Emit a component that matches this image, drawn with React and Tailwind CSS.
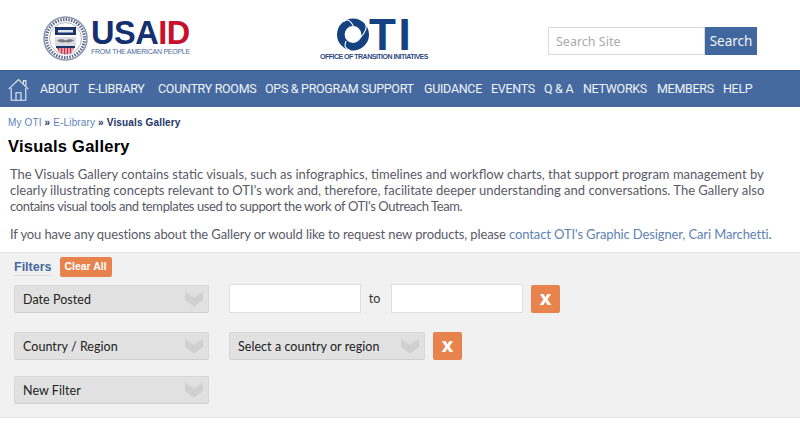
import React from "react";

const navItems = [
  ["ABOUT", "w-[39px]"],
  ["E-LIBRARY", "w-[61px]"],
  ["COUNTRY ROOMS", "w-[98px]"],
  ["OPS & PROGRAM SUPPORT", "w-[150px]"],
  ["GUIDANCE", "w-[58px]"],
  ["EVENTS", "w-[44px]"],
  ["Q & A", "w-[30px]"],
  ["NETWORKS", "w-[65px]"],
  ["MEMBERS", "w-[57px]"],
  ["HELP", "w-[29px]"],
];

function Seal() {
  return (
    <svg width="45" height="45" viewBox="0 0 45 45">
      <circle cx="22.5" cy="22.5" r="21.5" fill="#fff" stroke="#8a94ad" strokeWidth="1.5" />
      <circle cx="22.5" cy="22.5" r="19" fill="none" stroke="#5c6a90" strokeWidth="3" strokeDasharray="1.5 1.2" />
      <circle cx="22.5" cy="22.5" r="16" fill="#fff" stroke="#8a94ad" strokeWidth="0.7" />
      <path d="M12 11h21v8H12z" fill="#1c3468" />
      <path d="M15 14h15v2.5H15z" fill="#dfe4ee" />
      <path d="M12 21h21v9H12z" fill="#dcdde0" />
      <path d="M14 24.5c4-2 6-1 8.500 0 2.500-1 5-2 8.500 0-3 2-6 2.500-8.500 1.500-3 1-5.500.5-8.500-1.500z" fill="#77797f" />
      <path d="M13 30h19v2H13z" fill="#1c3468" />
      <path d="M14 32h17l-2.500 5c-2 1.500-10 1.500-12 0z" fill="#c8334a" />
      <path d="M17 32v6M20 32v6.500M23 32v6.500M26 32v6.500M29 32v5" stroke="#fff" strokeWidth="1" />
    </svg>
  );
}

function OtiRing() {
  return (
    <svg width="32" height="33" viewBox="0 0 32 33">
      <circle cx="16" cy="16.500" r="12.200" fill="none" stroke="#14417f" strokeWidth="7.600" />
      <path d="M17 9.500C13 .5 9 1 6.500 4M23 20c6-6 7-11 5.500-14.500M9 23c-2 6-1 7 4 9.500" fill="none" stroke="#fff" strokeWidth="1.100" />
    </svg>
  );
}

function HomeIcon() {
  return (
    <svg width="21" height="23" viewBox="0 0 21 23" fill="none" stroke="#e6edf6" strokeWidth="1.100">
      <path d="M.7 11.200 10.500 1.500l9.800 9.700" />
      <path d="M15.500 5.800V2.600h2.400v5.600" />
      <path d="M3.200 10v12.300h14.600V10" />
      <path d="M8 22.300v-7.500h5v7.500" />
    </svg>
  );
}

function Chevron() {
  return (
    <svg width="18" height="16" viewBox="0 0 18 16" className="shrink-0">
      <path d="M0 0 9 5l9-5v9l-9 6.500L0 9z" fill="#d0d0d0" />
      <path d="M0 0 9 5l9-5v1.500L9 7 0 1.500z" fill="#dcdcdc" />
    </svg>
  );
}

function FilterSelect({ label, width }) {
  return (
    <div className={`${width} h-[28px] flex items-center justify-between pl-[8px] pr-[5px] bg-[#e1e1e1] border border-[#d8d8d8] border-b-[#cfcfcf] rounded-[2px] text-[12.500px] tracking-[0.05px] text-[#222] whitespace-nowrap font-['Lato',sans-serif]`}>
      <span className="pt-[3px]">{label}</span>
      <Chevron />
    </div>
  );
}

function RemoveButton() {
  return (
    <button className="w-[29px] h-[28px] flex items-center justify-center bg-[#e8834e] rounded-[2px] text-white text-[16px] font-extrabold font-['Open_Sans',sans-serif]">
      X
    </button>
  );
}

export default function App() {
  return (
    <div className="w-[800px] h-[440px] overflow-hidden bg-white">
      <header className="h-[70px] flex items-start pl-[43px] pr-[43px] bg-white">
        <div className="w-[277px] pt-[16px] flex gap-[3px]">
          <Seal />
          <div className="pt-[3px]">
            <div className="h-[28px] text-[32.500px] leading-[28px] font-bold tracking-[-0.5px] font-['Liberation_Sans',sans-serif]">
              <span className="text-[#15306e]">USA</span>
              <span className="text-[#c8102e]">ID</span>
            </div>
            <div className="text-[7px] leading-[10px] tracking-[-0.25px] text-[#4c6a9c] font-['Liberation_Sans',sans-serif] whitespace-nowrap">
              FROM THE AMERICAN PEOPLE
            </div>
          </div>
        </div>
        <div className="w-[228px] pt-[18px]">
          <div className="w-[109px] flex flex-col">
            <div className="flex h-[34px] pl-[17px]">
              <OtiRing />
              <span className="text-[#14417f] text-[44px] leading-[33px] font-bold tracking-[2.5px] font-['Liberation_Sans',sans-serif]">TI</span>
            </div>
            <div className="text-[7px] leading-[9px] font-bold tracking-[-0.5px] text-[#2e4a80] whitespace-nowrap font-['Liberation_Sans',sans-serif]">
              OFFICE OF TRANSITION INITIATIVES
            </div>
          </div>
        </div>
        <div className="flex mt-[27px]">
          <input
            placeholder="Search Site"
            className="w-[157px] h-[28px] px-[7px] pt-[1px] bg-white border border-[#d9d9d9] text-[12.500px] placeholder:text-[#aaa] font-['Noto_Sans',sans-serif]"
          />
          <button className="w-[52px] h-[28px] pt-[1px] bg-[#41679f] text-[#f0f4fa] text-[13.500px] font-['Noto_Sans',sans-serif]">
            Search
          </button>
        </div>
      </header>

      <nav className="h-[37px] flex items-center pl-[8px] bg-[#466a9f] border-t border-[#3a5f97]">
        <div className="w-[32px] flex">
          <HomeIcon />
        </div>
        <div className="flex gap-[9px] text-[#eef3f9] text-[12.500px] tracking-[-0.3px] font-['Roboto',sans-serif]">
          {navItems.map(([name, width]) => (
            <span key={name} className={`${width} whitespace-nowrap`}>
              {name}
            </span>
          ))}
        </div>
      </nav>

      <main className="pt-[10px]">
        <div className="px-[8px] text-[10px] leading-[12px] font-['Liberation_Sans',sans-serif] tracking-[0.15px]">
          <span className="text-[#5e82b5]">My OTI</span>
          <span className="text-[#1d3467] font-bold"> » </span>
          <span className="text-[#5e82b5]">E-Library</span>
          <span className="text-[#1d3467] font-bold"> » Visuals Gallery</span>
        </div>
        <h1 className="px-[8px] mt-[7px] text-[16.500px] leading-[20px] font-bold tracking-[0.25px] text-black font-['Liberation_Sans',sans-serif]">
          Visuals Gallery
        </h1>
        <div className="px-[10px] mt-[10px] text-[13px] leading-[16px] text-[#5a5a66] font-['Lato',sans-serif]">
          <p className="whitespace-nowrap">
            The Visuals Gallery contains static visuals, such as infographics, timelines and workflow charts, that support program management by
            <br />
            clearly illustrating concepts relevant to OTI's work and, therefore, facilitate deeper understanding and conversations. The Gallery also
            <br />
            <span className="tracking-[-0.4px]">contains visual tools and templates used to support the work of OTI's Outreach Team.</span>
          </p>
          <p className="mt-[12px] whitespace-nowrap tracking-[-0.12px]">
            If you have any questions about the Gallery or would like to request new products, please{" "}
            <span className="text-[#5e82b5]">contact OTI's Graphic Designer, Cari Marchetti</span>.
          </p>
        </div>

        <section className="mt-[10px] h-[166px] bg-[#f1f1f1] border-y border-[#e3e3e3] pl-[14px]">
          <div className="flex items-center gap-[8px] pt-[4px]">
            <span className="text-[#46689e] text-[12.500px] font-bold font-['Liberation_Sans',sans-serif] border-b border-[#dcdcdc] leading-[16px]">
              Filters
            </span>
            <button className="w-[52px] h-[20px] bg-[#e8834e] rounded-[2px] text-white text-[10.500px] font-bold font-['Liberation_Sans',sans-serif]">
              Clear All
            </button>
          </div>
          <div className="flex items-center mt-[7px]">
            <FilterSelect label="Date Posted" width="w-[195px]" />
            <div className="flex items-center ml-[20px]">
              <input className="w-[132px] h-[29px] bg-white border border-[#dedede]" />
              <span className="w-[28px] pr-[1px] pt-[2px] text-center text-[12.500px] text-[#333] font-['Lato',sans-serif]">to</span>
              <input className="ml-[2px] w-[132px] h-[29px] bg-white border border-[#dedede]" />
              <div className="ml-[8px]">
                <RemoveButton />
              </div>
            </div>
          </div>
          <div className="flex items-center mt-[19px]">
            <FilterSelect label="Country / Region" width="w-[195px]" />
            <div className="ml-[20px]">
              <FilterSelect label="Select a country or region" width="w-[196px]" />
            </div>
            <div className="ml-[8px]">
              <RemoveButton />
            </div>
          </div>
          <div className="mt-[16px]">
            <FilterSelect label="New Filter" width="w-[195px]" />
          </div>
        </section>
      </main>
    </div>
  );
}
